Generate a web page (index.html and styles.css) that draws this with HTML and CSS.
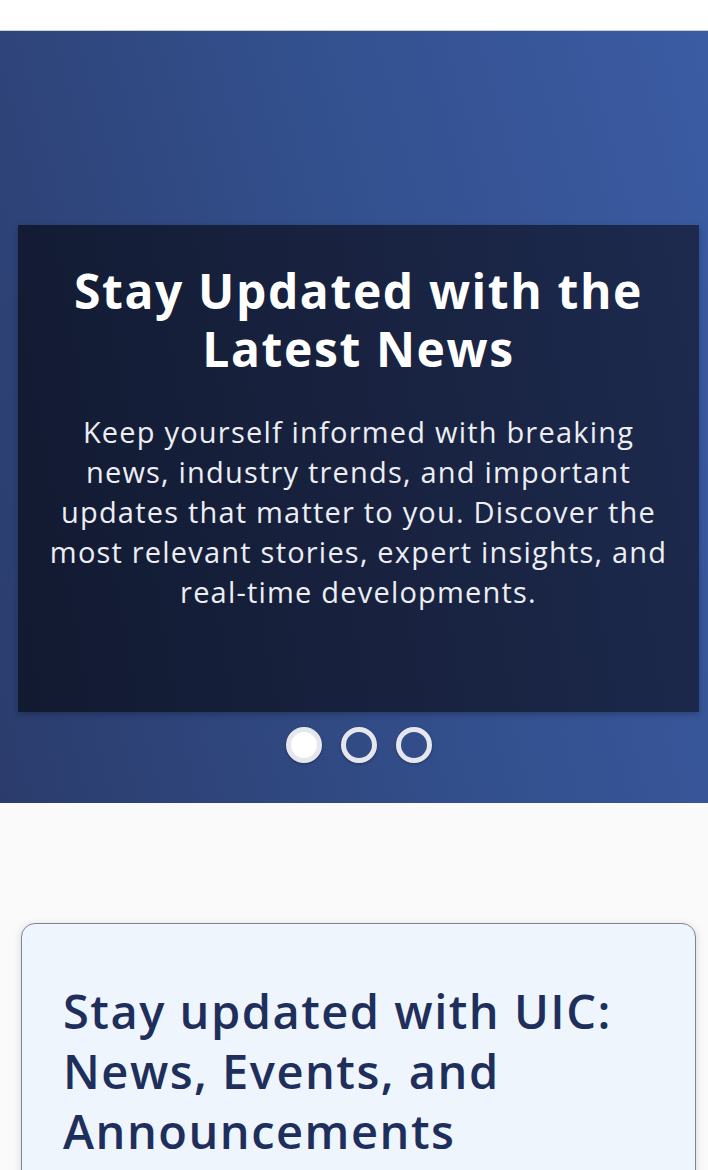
FILE: index.html
```html
<!DOCTYPE html>
<html lang="en">
<head>
<meta charset="utf-8">
<title>Latest News</title>
<link rel="stylesheet" href="styles.css">
</head>
<body>
<div class="topbar"></div>
<section class="hero">
  <div class="slide">
    <h1 class="slide-title">Stay Updated with the Latest News</h1>
    <p class="slide-text">Keep yourself informed with breaking<br>news, industry trends, and important<br>updates that matter to you. Discover the<br>most relevant stories, expert insights, and<br>real-time developments.</p>
  </div>
  <div class="dots">
    <span class="dot active"></span>
    <span class="dot"></span>
    <span class="dot"></span>
  </div>
</section>
<main class="content">
  <div class="card">
    <h2 class="card-title">Stay updated with UIC: News, Events, and Announcements</h2>
  </div>
</main>
</body>
</html>
```
FILE: styles.css
```css
* { box-sizing: border-box; }
html, body { margin: 0; padding: 0; }
body {
  font-family: "Open Sans", "Noto Sans", sans-serif;
  background: #fafafa;
  width: 708px;
  height: 1170px;
  overflow: hidden;
}
.topbar {
  height: 31px;
  background: #ffffff;
  border-bottom: 1px solid #c9cfdb;
}
.hero {
  height: 772px;
  background: linear-gradient(75deg, #2b3c6c 0%, #33508e 55%, #3b5ba3 100%);
  padding: 194px 0 0 9px;
  display: flex;
  flex-direction: column;
  align-items: center;
}
.slide {
  width: 681px;
  height: 487px;
  background: linear-gradient(80deg, #121a31 0%, #18223f 50%, #1d2a4e 100%);
  box-shadow: 0 2px 6px rgba(0,0,0,0.25);
  display: flex;
  flex-direction: column;
  align-items: center;
  padding: 37px 4px 0;
  text-align: center;
}
.slide-title {
  margin: 0;
  color: #ffffff;
  font-size: 48px;
  line-height: 58px;
  font-weight: 700;
  letter-spacing: 1.6px;
  max-width: 600px;
}
.slide-text {
  margin: 34px 0 0;
  color: #eceef3;
  font-size: 29px;
  line-height: 40px;
  font-weight: 400;
  letter-spacing: 1.2px;
  white-space: nowrap;
}
.dots {
  display: flex;
  gap: 19px;
  margin-top: 15px;
}
.dot {
  width: 36px;
  height: 36px;
  border-radius: 50%;
  border: 5px solid #e6e7ec;
  background: transparent;
  box-shadow: 0 1px 3px rgba(0,0,0,0.3);
}
.dot.active {
  background: #ffffff;
}
.content {
  padding: 120px 12px 0 21px;
}
.card {
  width: 675px;
  height: 400px;
  background: #eff5fd;
  border: 1.5px solid #7d8598;
  border-radius: 14px;
  box-shadow: 0 2px 8px rgba(0,0,0,0.15);
  padding: 57px 40px 0 41px;
}
.card-title {
  margin: 0;
  color: #1f2f5c;
  font-size: 47px;
  line-height: 60px;
  font-weight: 600;
  letter-spacing: 1.5px;
  max-width: 600px;
}
```
